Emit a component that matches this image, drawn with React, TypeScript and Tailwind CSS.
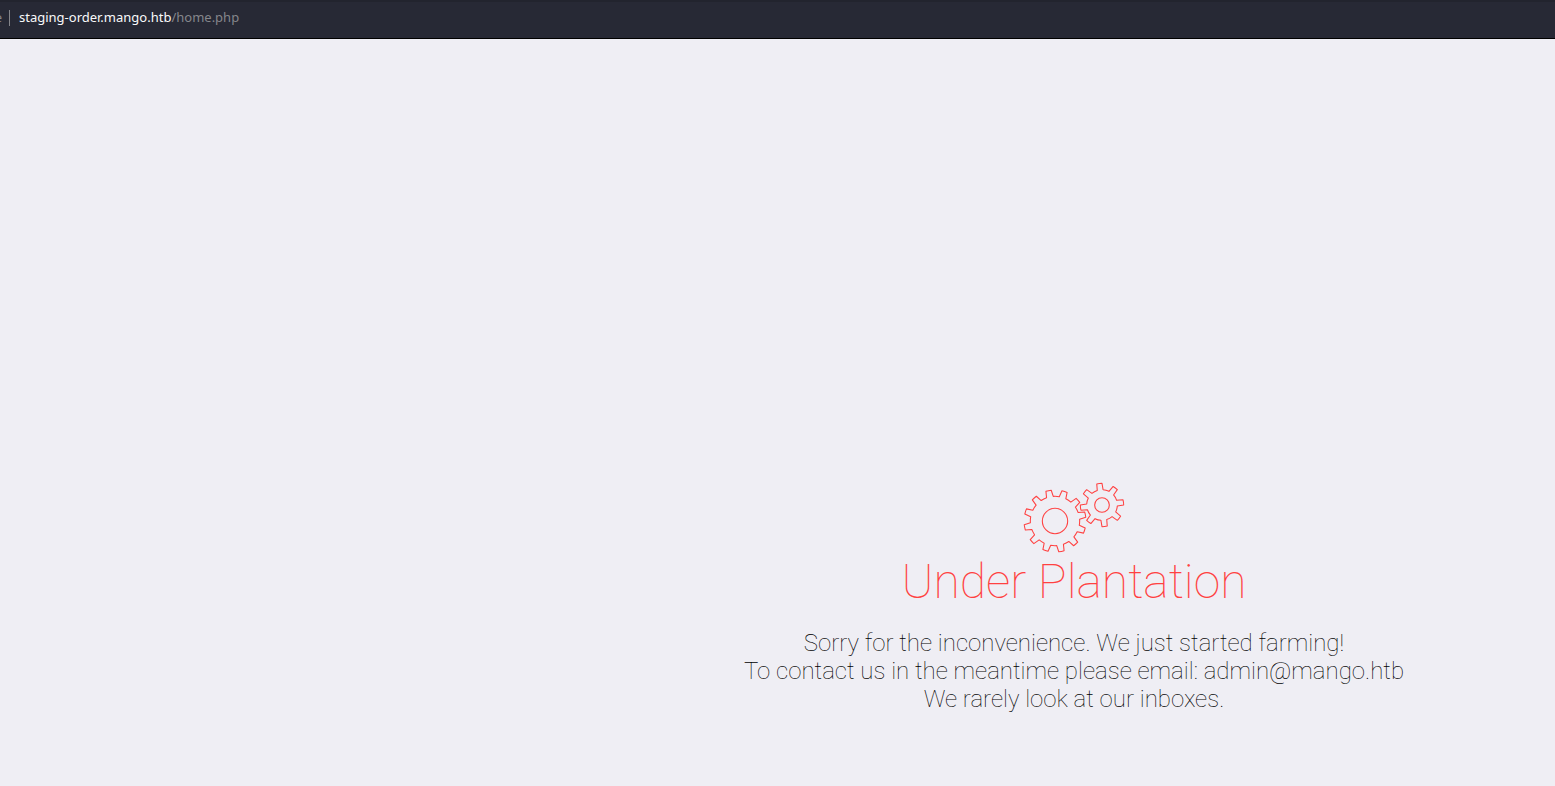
function gearPath(cx: number, cy: number, teeth: number, tip: number, root: number, start: number, tipHalf: number, rootHalf: number) {
  const step = 360 / teeth;
  const point = (r: number, deg: number) => {
    const a = (deg * Math.PI) / 180;
    return `${(cx + r * Math.cos(a)).toFixed(2)} ${(cy + r * Math.sin(a)).toFixed(2)}`;
  };
  let d = "";
  for (let i = 0; i < teeth; i++) {
    const a = start + i * step;
    d += `${i === 0 ? "M" : `A${root} ${root} 0 0 1 `}${point(root, a - rootHalf)}`;
    d += `L${point(tip, a - tipHalf)}A${tip} ${tip} 0 0 1 ${point(tip, a + tipHalf)}L${point(root, a + rootHalf)}`;
  }
  return `${d}A${root} ${root} 0 0 1 ${point(root, start - rootHalf)}Z`;
}

function Gears() {
  return (
    <svg viewBox="-3 0 360 255" className="h-[85px] w-[120px]" fill="none" stroke="#ff4141" strokeWidth="3.2" strokeLinejoin="round" aria-hidden="true">
      <path d={gearPath(120, 138, 12, 93, 74, -102, 5, 8)} />
      <circle cx="120" cy="138" r="38" />
      <path d={gearPath(261, 90, 8, 65, 46, -97, 7, 11)} />
      <circle cx="261" cy="90" r="22" />
    </svg>
  );
}

function AddressBar() {
  return (
    <header className="flex h-[39px] items-center overflow-hidden border-t-2 border-b border-t-[#22242e] border-b-black bg-[#272935] pb-1 font-['Noto_Sans',sans-serif] text-[13px] text-[#85868b]">
      <span className="flex w-[2px] justify-end">e</span>
      <span className="ml-[7px] h-4 w-px bg-[#85868b]" />
      <a href="#" className="ml-[9px] whitespace-nowrap">
        <span className="text-[#f9f9fa]">staging-order.mango.htb</span>/home.php
      </a>
    </header>
  );
}

export default function App() {
  return (
    <div className="flex min-h-screen flex-col bg-[#efeef4]">
      <AddressBar />
      <main className="flex grow flex-col items-center justify-end pb-[73px] pl-[593px] text-center font-[Roboto,sans-serif] font-thin">
        <Gears />
        <h1 className="text-5xl leading-[44px] text-[#ff4141]">Under Plantation</h1>
        <p className="mt-[25px] text-2xl leading-7 text-black">
          Sorry for the inconvenience. We just started farming!
          <br />
          To contact us in the meantime please email: admin@mango.htb
          <br />
          We rarely look at our inboxes.
        </p>
      </main>
    </div>
  );
}
